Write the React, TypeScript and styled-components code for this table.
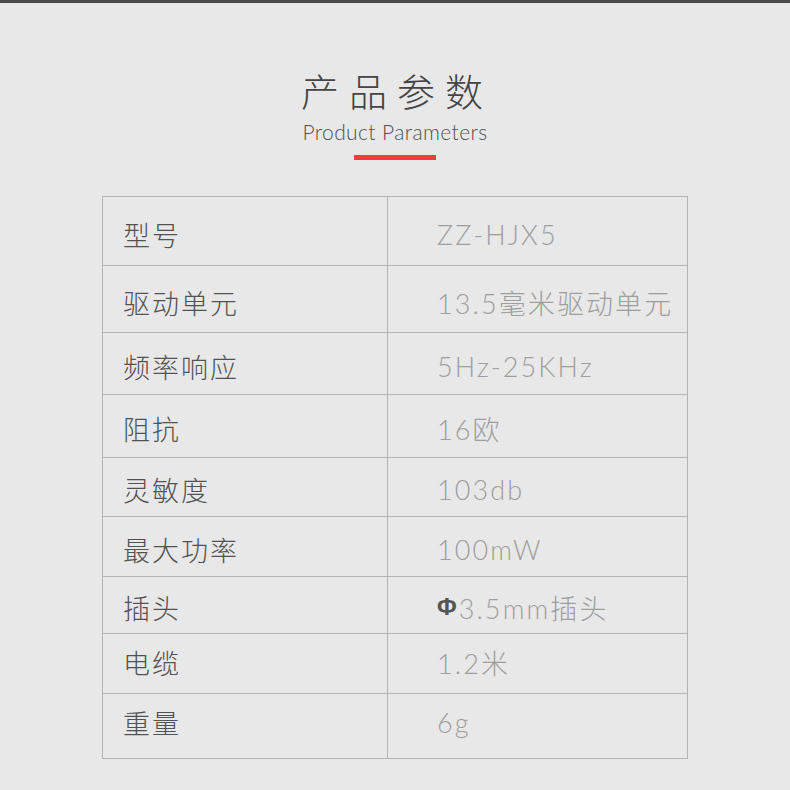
import styled, { createGlobalStyle } from "styled-components";

// dy: how far the text sits below the row's middle
const specs = [
  { label: "型号", value: "ZZ-HJX5", h: 68, dy: 3 },
  { label: "驱动单元", value: "13.5毫米驱动单元", h: 67, dy: 3 },
  { label: "频率响应", value: "5Hz-25KHz", h: 62, dy: 3 },
  { label: "阻抗", value: "16欧", h: 63, dy: 2 },
  { label: "灵敏度", value: "103db", h: 59, dy: 2 },
  { label: "最大功率", value: "100mW", h: 60, dy: 3 },
  { label: "插头", value: "3.5mm插头", h: 57, dy: 2, phi: true },
  { label: "电缆", value: "1.2米", h: 60, dy: -1 },
  { label: "重量", value: "6g", h: 65, dy: -4 },
];

export default function App() {
  return (
    <Page>
      <GlobalStyle />
      <Header>
        <Title>产品参数</Title>
        <Subtitle>Product Parameters</Subtitle>
        <Accent />
      </Header>

      <Table>
        {specs.map(({ label, value, h, dy, phi }) => (
          <Row key={label} $h={h} $dy={dy}>
            <LabelCell>{label}</LabelCell>
            <ValueCell>
              {phi && <Phi>Φ</Phi>}
              {value}
            </ValueCell>
          </Row>
        ))}
      </Table>
    </Page>
  );
}

const GlobalStyle = createGlobalStyle`
  body {
    margin: 0;
    background: #e8e8e8;
  }
`;

const Page = styled.div`
  width: 790px;
  min-height: 787px;
  background: #e8e8e8;
  border-top: 3px solid #4a4a4a;
  font-family: "Noto Sans CJK SC", sans-serif;
`;

const Header = styled.div`
  display: flex;
  flex-direction: column;
  align-items: center;
  padding-top: 67px;
`;

const Title = styled.div`
  font-size: 38px;
  line-height: 40px;
  font-weight: 300;
  letter-spacing: 10px;
  padding-left: 4px;
  color: #444;
`;

const Subtitle = styled.div`
  margin-top: 10px;
  font-family: Lato, "Liberation Sans", sans-serif;
  font-weight: 300;
  font-size: 21px;
  line-height: 24px;
  letter-spacing: 0.4px;
  color: #505050;
`;

const Accent = styled.div`
  margin-top: 11px;
  width: 82px;
  height: 5px;
  background: #f23b3b;
`;

const Table = styled.div`
  margin: 36px 0 0 102px;
  width: 584px;
  border: 1px solid #b4b4b4;
`;

const Row = styled.div<{ $h: number; $dy: number }>`
  display: grid;
  grid-template-columns: 285px 1fr;
  height: ${(p) => p.$h}px;
  box-sizing: border-box;

  & > div {
    padding-top: ${(p) => Math.max(0, p.$dy * 2)}px;
    padding-bottom: ${(p) => Math.max(0, -p.$dy * 2)}px;
  }

  & + & {
    border-top: 1px solid #b4b4b4;
  }
`;

const LabelCell = styled.div`
  display: flex;
  align-items: center;
  padding-left: 20px;
  border-right: 1px solid #b4b4b4;
  font-size: 27px;
  letter-spacing: 2px;
  font-weight: 300;
  color: #525252;
`;

const ValueCell = styled.div`
  display: flex;
  align-items: center;
  padding-left: 49px;
  font-family: Lato, "Noto Sans CJK SC", sans-serif;
  font-size: 27px;
  font-weight: 300;
  letter-spacing: 2.1px;
  color: #9e9e9e;
`;

const Phi = styled.span`
  font-family: "Liberation Sans", sans-serif;
  font-weight: 700;
  font-size: 24px;
  letter-spacing: 0;
  color: #555;
  margin-right: 2px;
`;
